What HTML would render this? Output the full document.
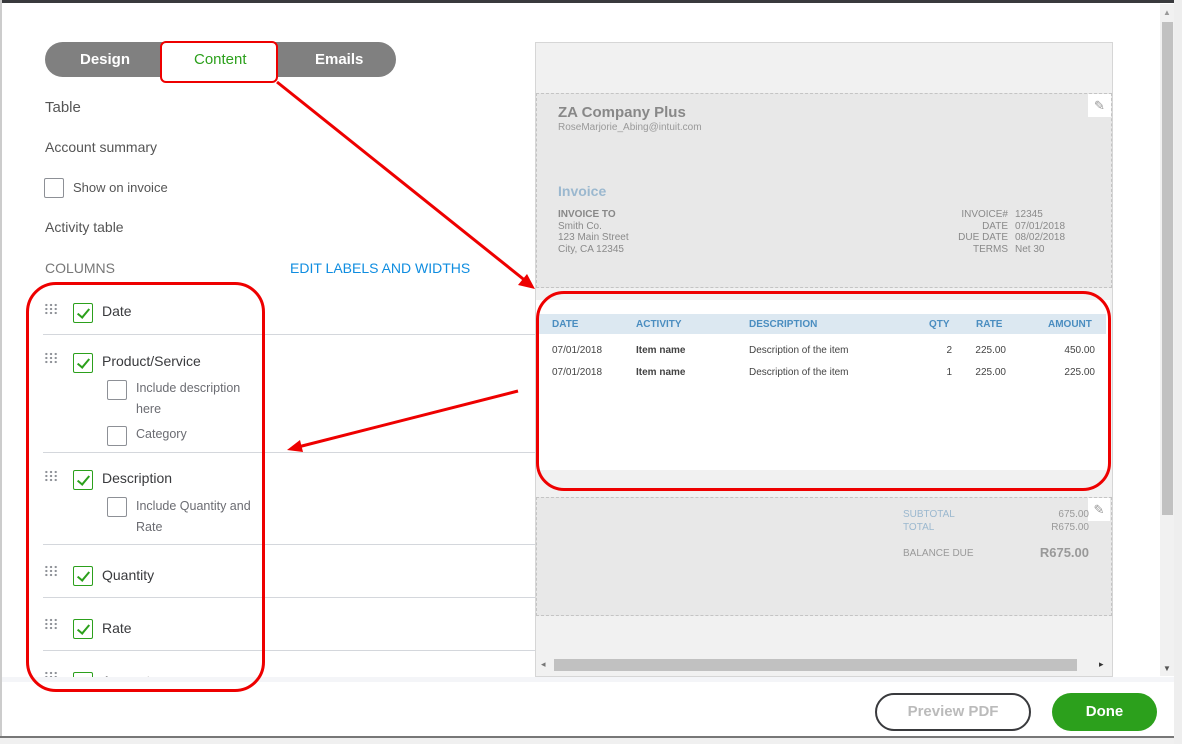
<!DOCTYPE html>
<html><head><style>
*{margin:0;padding:0;box-sizing:border-box}
body{width:1182px;height:744px;position:relative;overflow:hidden;background:#fff;font-family:"Liberation Sans",sans-serif;color:#393a3d}
.a{position:absolute}
.t{font-size:14px;color:#555}
.cb{position:absolute;width:20px;height:20px;border:1px solid #8d9096;border-radius:2px;background:#fff}
.ck{position:absolute;width:20px;height:20px;border:1px solid #2ca01c;border-radius:2px;background:#fff}
.ck:after{content:"";position:absolute;left:6px;top:2px;width:5px;height:10px;border:solid #2ca01c;border-width:0 2.5px 2.5px 0;transform:rotate(40deg)}
.grip{position:absolute;width:14px;height:12px;background-image:radial-gradient(circle,#8d9096 1px,transparent 1.3px);background-size:4.7px 4px}
.line{position:absolute;left:43px;width:493px;height:1px;background:#d4d7dc}
.lbl{position:absolute;font-size:14px;color:#393a3d}
.sub{position:absolute;font-size:12.5px;color:#6b6c72;line-height:21px}
.inv{font-size:10px;color:#8a8a8a;position:absolute;line-height:11.5px}
</style></head><body>
<div class="a" style="left:0;top:0;width:1182px;height:3px;background:#393a3d"></div>
<div class="a" style="left:0;top:0;width:2px;height:744px;background:#ccc"></div>
<!-- tabs -->
<div class="a" style="left:45px;top:42px;width:351px;height:35px;border-radius:18px;background:#808080"></div>
<div class="a" style="left:80px;top:51px;font-size:15px;font-weight:bold;color:#fff">Design</div>
<div class="a" style="left:315px;top:51px;font-size:15px;font-weight:bold;color:#fff">Emails</div>
<div class="a" style="left:160px;top:41px;width:118px;height:42px;background:#fff;border:2.5px solid #e00;border-radius:6px"></div>
<div class="a" style="left:194px;top:51px;font-size:15px;color:#2ca01c">Content</div>
<div class="a t" style="left:45px;top:99px;font-size:15px">Table</div>
<div class="a t" style="left:45px;top:139px">Account summary</div>
<div class="cb" style="left:44px;top:178px"></div>
<div class="a t" style="left:73px;top:180px;font-size:13px">Show on invoice</div>
<div class="a t" style="left:45px;top:219px">Activity table</div>
<div class="a t" style="left:45px;top:260px;color:#777">COLUMNS</div>
<div class="a" style="left:290px;top:260px;font-size:14px;color:#0f8de0">EDIT LABELS AND WIDTHS</div>
<!-- rows -->
<div class="grip" style="left:44px;top:303px"></div><div class="ck" style="left:73px;top:303px"></div><div class="lbl" style="left:102px;top:303px">Date</div>
<div class="line" style="top:334px"></div>
<div class="grip" style="left:44px;top:352px"></div><div class="ck" style="left:73px;top:353px"></div><div class="lbl" style="left:102px;top:353px">Product/Service</div>
<div class="cb" style="left:107px;top:380px"></div><div class="sub" style="left:136px;top:378px">Include description<br>here</div>
<div class="cb" style="left:107px;top:426px"></div><div class="sub" style="left:136px;top:424px">Category</div>
<div class="line" style="top:452px"></div>
<div class="grip" style="left:44px;top:470px"></div><div class="ck" style="left:73px;top:470px"></div><div class="lbl" style="left:102px;top:470px">Description</div>
<div class="cb" style="left:107px;top:497px"></div><div class="sub" style="left:136px;top:496px">Include Quantity and<br>Rate</div>
<div class="line" style="top:544px"></div>
<div class="grip" style="left:44px;top:565px"></div><div class="ck" style="left:73px;top:566px"></div><div class="lbl" style="left:102px;top:567px">Quantity</div>
<div class="line" style="top:597px"></div>
<div class="grip" style="left:44px;top:618px"></div><div class="ck" style="left:73px;top:619px"></div><div class="lbl" style="left:102px;top:620px">Rate</div>
<div class="line" style="top:650px"></div>
<div class="grip" style="left:44px;top:671px"></div><div class="ck" style="left:73px;top:672px"></div><div class="lbl" style="left:102px;top:673px">Amount</div>
<!-- preview -->
<div class="a" style="left:535px;top:42px;width:578px;height:635px;background:#f1f1f1;border:1px solid #d6d6d6"></div>
<div class="a" style="left:536px;top:93px;width:576px;height:195px;background:#e8e8e8;border:1px dashed #c4c4c4"></div>
<div class="a" style="left:1088px;top:94px;width:23px;height:23px;background:#fff;color:#999;font-size:13px;text-align:center;line-height:23px">✎</div>
<div class="a" style="left:558px;top:104px;font-size:15px;font-weight:bold;color:#888">ZA Company Plus</div>
<div class="a" style="left:558px;top:122px;font-size:10px;color:#999">RoseMarjorie_Abing@intuit.com</div>
<div class="a" style="left:558px;top:183px;font-size:14px;font-weight:bold;color:#9bb8cf">Invoice</div>
<div class="inv" style="left:558px;top:209px"><b style="color:#888">INVOICE TO</b><br>Smith Co.<br>123 Main Street<br>City, CA 12345</div>
<div class="inv" style="left:912px;top:209px;width:96px;text-align:right">INVOICE#<br>DATE<br>DUE DATE<br>TERMS</div>
<div class="inv" style="left:1015px;top:209px">12345<br>07/01/2018<br>08/02/2018<br>Net 30</div>
<div class="a" style="left:536px;top:300px;width:574px;height:170px;background:#fff"></div>
<div class="a" style="left:538px;top:314px;width:568px;height:20px;background:#dce8f1"></div>
<div class="a" style="font-size:10px;font-weight:bold;color:#4a8dc0;top:319px;left:552px">DATE</div>
<div class="a" style="font-size:10px;font-weight:bold;color:#4a8dc0;top:319px;left:636px">ACTIVITY</div>
<div class="a" style="font-size:10px;font-weight:bold;color:#4a8dc0;top:319px;left:749px">DESCRIPTION</div>
<div class="a" style="font-size:10px;font-weight:bold;color:#4a8dc0;top:319px;left:929px">QTY</div>
<div class="a" style="font-size:10px;font-weight:bold;color:#4a8dc0;top:319px;left:976px">RATE</div>
<div class="a" style="font-size:10px;font-weight:bold;color:#4a8dc0;top:319px;left:1048px">AMOUNT</div>
<div class="a" style="font-size:10px;color:#444;top:340px;left:552px;line-height:22px">07/01/2018<br>07/01/2018</div>
<div class="a" style="font-size:10px;color:#444;font-weight:bold;top:340px;left:636px;line-height:22px">Item name<br>Item name</div>
<div class="a" style="font-size:10px;color:#444;top:340px;left:749px;line-height:22px">Description of the item<br>Description of the item</div>
<div class="a" style="font-size:10px;color:#444;top:340px;left:940px;width:12px;text-align:right;line-height:22px">2<br>1</div>
<div class="a" style="font-size:10px;color:#444;top:340px;left:960px;width:46px;text-align:right;line-height:22px">225.00<br>225.00</div>
<div class="a" style="font-size:10px;color:#444;top:340px;left:1040px;width:55px;text-align:right;line-height:22px">450.00<br>225.00</div>
<div class="a" style="left:536px;top:497px;width:576px;height:119px;background:#e8e8e8;border:1px dashed #c4c4c4"></div>
<div class="a" style="left:1088px;top:498px;width:22px;height:23px;background:#fff;color:#999;font-size:13px;text-align:center;line-height:23px">✎</div>
<div class="a" style="left:903px;top:508px;font-size:10px;color:#9bb8cf;line-height:13px">SUBTOTAL<br>TOTAL</div>
<div class="a" style="left:1030px;top:508px;width:59px;text-align:right;font-size:10px;color:#999;line-height:13px">675.00<br>R675.00</div>
<div class="a" style="left:903px;top:548px;font-size:10px;color:#999">BALANCE DUE</div>
<div class="a" style="left:1020px;top:545px;width:69px;text-align:right;font-size:13px;font-weight:bold;color:#999">R675.00</div>
<div class="a" style="left:554px;top:659px;width:523px;height:12px;background:#c1c1c1"></div>
<div class="a" style="left:541px;top:659px;font-size:9px;color:#777">◂</div>
<div class="a" style="left:1099px;top:659px;font-size:9px;color:#333">▸</div>
<!-- vertical scrollbar -->
<div class="a" style="left:1160px;top:4px;width:14px;height:672px;background:#f1f1f1"></div>
<div class="a" style="left:1162px;top:22px;width:11px;height:493px;background:#c1c1c1"></div>
<div class="a" style="left:1163px;top:8px;font-size:8px;color:#999">▲</div>
<div class="a" style="left:1163px;top:664px;font-size:8px;color:#555">▼</div>
<div class="a" style="left:1174px;top:0;width:8px;height:744px;background:#eee"></div>
<!-- footer -->
<div class="a" style="left:2px;top:677px;width:1172px;height:5px;background:#f4f5f8"></div>
<div class="a" style="left:2px;top:682px;width:1172px;height:54px;background:#fff"></div>
<div class="a" style="left:875px;top:693px;width:156px;height:38px;border:2px solid #393a3d;border-radius:19px;text-align:center;line-height:34px;font-size:15px;font-weight:bold;color:#bbb">Preview PDF</div>
<div class="a" style="left:1052px;top:693px;width:105px;height:38px;background:#2ca01c;border-radius:19px;text-align:center;line-height:38px;font-size:15px;font-weight:bold;color:#fff">Done</div>
<div class="a" style="left:0;top:736px;width:1174px;height:2px;background:#777"></div>
<div class="a" style="left:0;top:738px;width:1174px;height:6px;background:#f0f0f0"></div>
<!-- annotations -->
<div class="a" style="left:26px;top:282px;width:239px;height:410px;border:3px solid #e00;border-radius:30px"></div>
<div class="a" style="left:536px;top:291px;width:575px;height:200px;border:3px solid #e00;border-radius:28px"></div>
<svg class="a" style="left:0;top:0" width="1182" height="744">
<line x1="277" y1="82" x2="527" y2="282" stroke="#e00" stroke-width="3"/>
<polygon points="535,289 518,285 527,274" fill="#e00"/>
<line x1="518" y1="391" x2="298" y2="447" stroke="#e00" stroke-width="3"/>
<polygon points="287,450 300,440 303,452" fill="#e00"/>
</svg>
</body></html>
